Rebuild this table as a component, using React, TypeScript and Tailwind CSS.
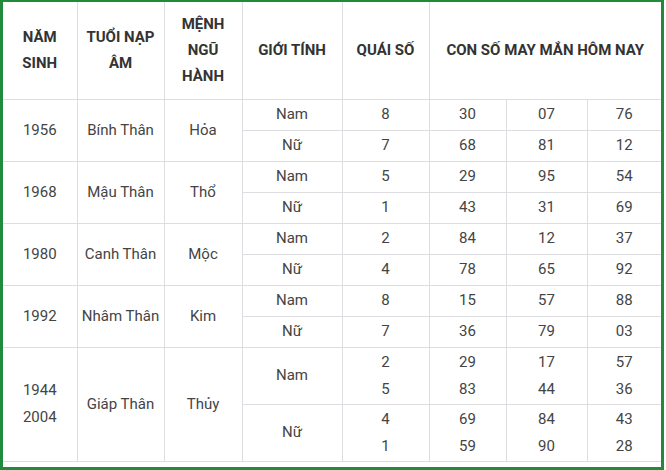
type Line = { gender: string; quai: string[]; nums: string[][] };
type Group = { years: string[]; name: string; menh: string; lines: Line[] };

const groups: Group[] = [
  {
    years: ["1956"],
    name: "Bính Thân",
    menh: "Hỏa",
    lines: [
      { gender: "Nam", quai: ["8"], nums: [["30"], ["07"], ["76"]] },
      { gender: "Nữ", quai: ["7"], nums: [["68"], ["81"], ["12"]] },
    ],
  },
  {
    years: ["1968"],
    name: "Mậu Thân",
    menh: "Thổ",
    lines: [
      { gender: "Nam", quai: ["5"], nums: [["29"], ["95"], ["54"]] },
      { gender: "Nữ", quai: ["1"], nums: [["43"], ["31"], ["69"]] },
    ],
  },
  {
    years: ["1980"],
    name: "Canh Thân",
    menh: "Mộc",
    lines: [
      { gender: "Nam", quai: ["2"], nums: [["84"], ["12"], ["37"]] },
      { gender: "Nữ", quai: ["4"], nums: [["78"], ["65"], ["92"]] },
    ],
  },
  {
    years: ["1992"],
    name: "Nhâm Thân",
    menh: "Kim",
    lines: [
      { gender: "Nam", quai: ["8"], nums: [["15"], ["57"], ["88"]] },
      { gender: "Nữ", quai: ["7"], nums: [["36"], ["79"], ["03"]] },
    ],
  },
  {
    years: ["1944", "2004"],
    name: "Giáp Thân",
    menh: "Thủy",
    lines: [
      { gender: "Nam", quai: ["2", "5"], nums: [["29", "83"], ["17", "44"], ["57", "36"]] },
      { gender: "Nữ", quai: ["4", "1"], nums: [["69", "59"], ["84", "90"], ["43", "28"]] },
    ],
  },
];

const cell = "border-b border-r border-[#dddde2] p-0 text-center align-middle";

function Stack({ items }: { items: string[] }) {
  return (
    <div className="flex flex-col py-[1px] leading-[27px]">
      {items.map((t, i) => (
        <span key={i}>{t}</span>
      ))}
    </div>
  );
}

export default function App() {
  return (
    <div className="w-[664px] h-[470px] bg-white border-t-2 border-x-[3px] border-b-[3px] border-[#228b3b] overflow-hidden font-['Roboto',sans-serif]">
      <table className="w-[658px] table-fixed border-collapse text-[15px] text-[#444]">
        <colgroup>
          <col className="w-[74px]" />
          <col className="w-[87px]" />
          <col className="w-[78px]" />
          <col className="w-[100px]" />
          <col className="w-[87px]" />
          <col className="w-[77px]" />
          <col className="w-[81px]" />
          <col className="w-[74px]" />
        </colgroup>
        <thead>
          <tr className="h-[97px] text-[15px] font-bold text-[#333] leading-[26px]">
            <th className={cell}>NĂM<br />SINH</th>
            <th className={cell}>TUỔI NẠP<br />ÂM</th>
            <th className={cell}>MỆNH<br />NGŨ<br />HÀNH</th>
            <th className={cell}>GIỚI TÍNH</th>
            <th className={cell}>QUÁI SỐ</th>
            <th className={cell + " border-r-0"} colSpan={3}>
              CON SỐ MAY MẮN HÔM NAY
            </th>
          </tr>
        </thead>
        <tbody>
          {groups.map((g) =>
            g.lines.map((ln, i) => (
              <tr key={g.name + ln.gender} className={ln.quai.length > 1 ? "h-[57px]" : "h-[31px]"}>
                {i === 0 && (
                  <>
                    <td className={cell} rowSpan={2}>
                      <Stack items={g.years} />
                    </td>
                    <td className={cell} rowSpan={2}>{g.name}</td>
                    <td className={cell} rowSpan={2}>{g.menh}</td>
                  </>
                )}
                <td className={cell}>{ln.gender}</td>
                <td className={cell}>
                  <Stack items={ln.quai} />
                </td>
                {ln.nums.map((col, k) => (
                  <td key={k} className={cell + (k === 2 ? " border-r-0" : "")}>
                    <Stack items={col} />
                  </td>
                ))}
              </tr>
            ))
          )}
        </tbody>
      </table>
    </div>
  );
}
